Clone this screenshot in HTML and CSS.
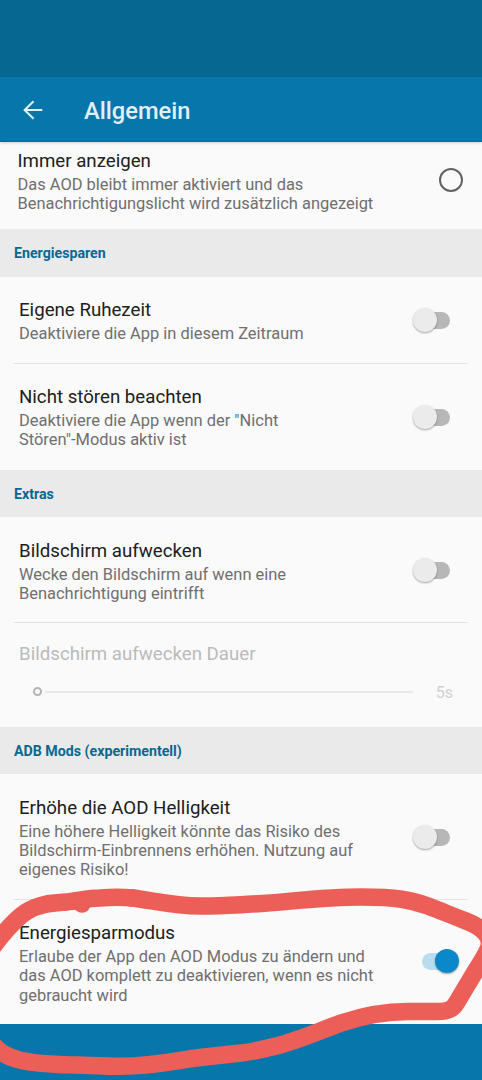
FILE: index.html
```
<!DOCTYPE html>
<html lang="de">
	<head>
		<meta charset="utf-8">

		<title>Allgemein</title>

		<link rel="stylesheet" href="styles.css">
	</head>
	<body>
	<div class="statusbar"></div>
	<header class="toolbar">
		<svg class="back" width="20" height="20" viewBox="0 0 20 20">
			<path d="M10.6 1.2 L1.6 10 L10.6 18.8 M1.6 10 H19.3"/>
		</svg>
		<h1>Allgemein</h1>
	</header>

	<main class="list">
		<div class="row first">
			<div class="text">
				<h3>Immer anzeigen</h3>
				<p>Das AOD bleibt immer aktiviert und das<br>Benachrichtigungslicht wird zusätzlich angezeigt</p>
			</div>
			<span class="radio"></span>
		</div>

		<h2>Energiesparen</h2>
		<div class="row">
			<div class="text">
				<h3>Eigene Ruhezeit</h3>
				<p>Deaktiviere die App in diesem Zeitraum</p>
			</div>
			<span class="switch"></span>
		</div>
		<div class="row divided">
			<div class="text">
				<h3>Nicht stören beachten</h3>
				<p>Deaktiviere die App wenn der "Nicht<br>Stören"-Modus aktiv ist</p>
			</div>
			<span class="switch"></span>
		</div>

		<h2>Extras</h2>
		<div class="row">
			<div class="text">
				<h3>Bildschirm aufwecken</h3>
				<p>Wecke den Bildschirm auf wenn eine<br>Benachrichtigung eintrifft</p>
			</div>
			<span class="switch"></span>
		</div>
		<div class="row divided disabled">
			<h3>Bildschirm aufwecken Dauer</h3>
			<div class="slider">
				<span class="thumb"></span>
				<span class="track"></span>
				<span class="value">5s</span>
			</div>
		</div>

		<h2>ADB Mods (experimentell)</h2>
		<div class="row">
			<div class="text">
				<h3>Erhöhe die AOD Helligkeit</h3>
				<p>Eine höhere Helligkeit könnte das Risiko des<br>Bildschirm-Einbrennens erhöhen. Nutzung auf<br>eigenes Risiko!</p>
			</div>
			<span class="switch"></span>
		</div>
		<div class="row divided">
			<div class="text">
				<h3>Energiesparmodus</h3>
				<p>Erlaube der App den AOD Modus zu ändern und<br>das AOD komplett zu deaktivieren, wenn es nicht<br>gebraucht wird</p>
			</div>
			<span class="switch on"></span>
		</div>
	</main>
	<footer class="navbar"></footer>

	<!-- hand-drawn marker around the last setting -->
	<svg class="marker" width="482" height="1080" viewBox="0 0 482 1080">
		<path d="M-8 948 C4 932 14 920 26 912 C40 903 54 903 67 902 C78 901 88 898 100 898 C112 897 122 897 133 898 C155 901 175 906 200 906 C213 906 227 905.500 241 904.700 C281 903 320 897 361 897 C397 897 411 900 428 906 C441 911 453 916 466 921 C481 927 492 935 489 947 C487 953 480 964 475 972 L460 997 C454 1008 452 1011.500 436 1011.500 L408 1011.500 C383 1011.500 362 1016 341 1023 C319 1031 297 1041 274 1046.500 C262 1049.500 252 1052 241 1053 L200 1057.500 C179 1060 155 1066 121 1066.300 C103 1066.300 85 1065 67 1064.700 C50 1064 41 1064 30 1062 C15 1060 5 1056 -3 1049 L-10 1041"/>
		<circle cx="82" cy="904" r="8.700"/>
		<circle cx="132" cy="898" r="9"/>
	</svg>
	</body>
</html>
```
FILE: styles.css
```
* {
	box-sizing: border-box;
}

body {
	position: relative;
	height: 1080px;
	margin: 0;
	overflow: hidden;

	display: flex;
	flex-direction: column;

	background: #fafafa;
	font-family: Roboto, "Liberation Sans", sans-serif;
}

h1, h2, h3, p {
	margin: 0;
}

.statusbar {
	height: 77px;
	background: #066790;
}

.toolbar {
	height: 65px;
	padding: 2px 23px 0;

	display: flex;
	align-items: center;
	gap: 41px;

	background: #0777ab;
	border-bottom: 1px solid #056a9b;
	box-shadow: 0 1px 3px rgba(0,0,0,0.18);
	z-index: 1;
}

.toolbar h1 {
	padding-top: 2px;
	color: #e1eff6;
	font-size: 23.700px;
	font-weight: 500;
	line-height: 30px;
}

.back path {
	fill: none;
	stroke: #e1eff6;
	stroke-width: 2;
}

.list {
	height: 882px;
	overflow: hidden;
}

.list h2 {
	height: 47.500px;
	padding-left: 14px;

	background: #eaeaea;
	color: #066892;

	font-size: 14.200px;
	font-weight: 700;
	line-height: 49px;
}

.row {
	position: relative;
	padding: 22.500px 32px 20.300px 19px;

	display: flex;
	align-items: center;
	justify-content: space-between;
}

.row.first {
	height: 87px;
	padding: 7.600px 19px 15px 17.500px;
}

.row h3 {
	color: #202020;
	font-size: 18.680px;
	font-weight: 400;
	line-height: 22px;
	white-space: nowrap;
}

.row p {
	margin-top: 3px;

	color: #6f6f6f;
	font-size: 16.450px;
	line-height: 19.200px;
	white-space: nowrap;
}

.divided::before {
	content: "";
	position: absolute;
	top: -1px;
	left: 14px;
	right: 14px;
	height: 1px;
	background: #e3e3e3;
}

.radio {
	width: 24px;
	height: 24px;
	margin-bottom: 4px;
	border: 2.500px solid #626262;
	border-radius: 50%;
}

.switch {
	position: relative;
	width: 29px;
	height: 17px;
	margin-bottom: 1px;
	background: #b7b7b7;
	border-radius: 9px;
}

.switch::after {
	content: "";
	position: absolute;
	top: -4px;
	left: -8px;
	width: 24px;
	height: 24px;
	background: #ebebeb;
	border-radius: 50%;
	box-shadow: 0 1px 2px rgba(0,0,0,0.35);
}

.switch.on {
	width: 28px;
	margin-bottom: 3px;
	background: #badcef;
}

.switch.on::after {
	left: 13px;
	background: #0b88ca;
}

.row.disabled {
	height: 103.300px;
	padding: 19.500px 29px 0 19px;
	display: block;
}

.disabled h3 {
	color: #bababa;
}

.slider {
	margin-top: 16px;
	padding-left: 14px;
	display: flex;
	align-items: center;
	height: 22px;
}

.thumb {
	width: 9px;
	height: 9px;
	border: 2px solid #b5b5b5;
	border-radius: 50%;
}

.track {
	width: 368px;
	height: 2px;
	margin-left: 3px;
	background: #e9e9e9;
}

.value {
	margin-left: auto;
	padding-top: 2px;
	color: #d2d2d2;
	font-size: 16px;
}

.navbar {
	height: 56px;
	background: #0777ab;
}

.marker {
	position: absolute;
	top: 0;
	left: 0;
	z-index: 2;
}

.marker path {
	fill: none;
	stroke: #ec5f59;
	stroke-width: 17.500px;
	stroke-linejoin: round;
}

.marker circle {
	fill: #ec5f59;
}
```
